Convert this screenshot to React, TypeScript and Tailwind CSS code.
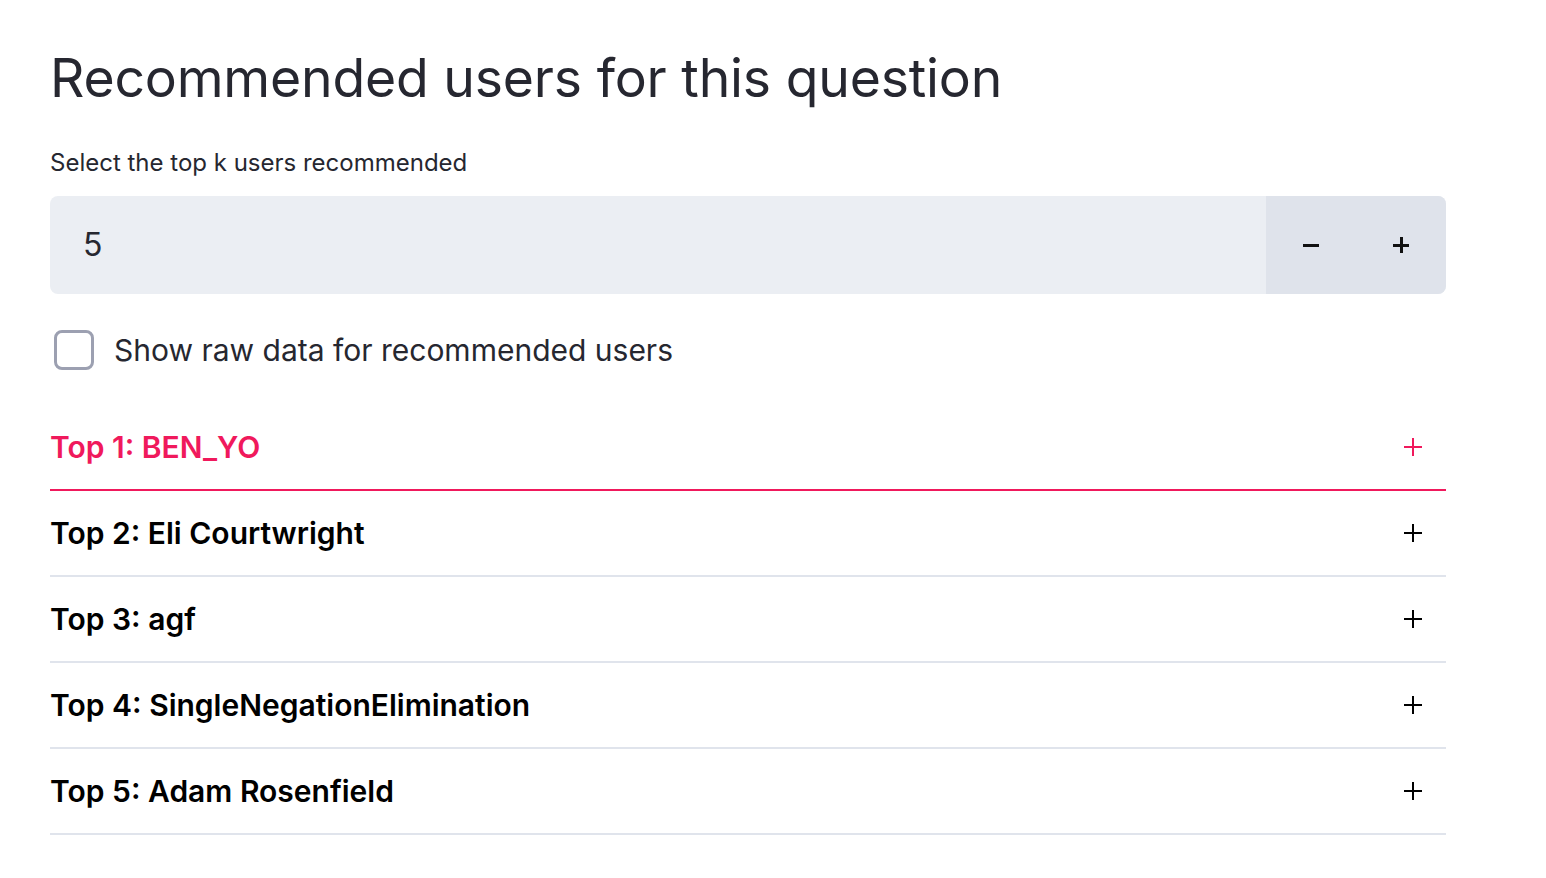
import { useState } from "react";

const users = ["BEN_YO", "Eli Courtwright", "agf", "SingleNegationElimination", "Adam Rosenfield"];

function PlusIcon({ className }: { className?: string }) {
    return (
        <svg width="20" height="20" viewBox="0 0 20 20" className={className}>
            <path d="M10 1v18M1 10h18" stroke="currentColor" strokeWidth="2" strokeLinecap="butt" />
        </svg>
    );
}

export default function App() {
    const [k, setK] = useState(5);
    const [raw, setRaw] = useState(false);

    return (
        <div className="min-h-screen bg-white px-[50px] text-[#262730] [font-family:Inter,'Noto_Sans',sans-serif]">
            <div className="w-[1396px]">
                <h1 className="pt-[44px] text-[53.5px] leading-[68px] font-normal tracking-[-0.2px]">
                    Recommended users for this question
                </h1>

                <div className="mt-[36px] text-[24px] leading-[30px]">Select the top k users recommended</div>

                <div className="mt-[18px] flex h-[98px] overflow-hidden rounded-[8px] bg-[#ebeef3]">
                    <div className="flex flex-1 items-center pl-[33px] text-[32px]">{k}</div>
                    <div className="flex w-[180px] bg-[#dfe3eb]">
                        <button
                            className="flex w-[90px] items-center justify-center"
                            onClick={() => setK(Math.max(1, k - 1))}
                        >
                            <span className="block h-[3px] w-[16px] bg-[#111]" />
                        </button>
                        <button
                            className="relative flex w-[90px] items-center justify-center"
                            onClick={() => setK(k + 1)}
                        >
                            <span className="block h-[3px] w-[16px] bg-[#111]" />
                            <span className="absolute h-[16px] w-[3px] bg-[#111]" />
                        </button>
                    </div>
                </div>

                <label className="mt-[36px] flex cursor-pointer items-center gap-[20px] pl-[4px]">
                    <span
                        onClick={() => setRaw(!raw)}
                        className="block h-[40px] w-[40px] rounded-[8px] border-[3px] border-[#9ca0b1] bg-white"
                    />
                    <span className="text-[30px] leading-[40px]">Show raw data for recommended users</span>
                </label>

                <div className="mt-[35px]">
                    {users.map((u, i) => {
                        const first = i === 0;
                        return (
                            <div
                                key={u}
                                className={
                                    first
                                        ? "flex h-[86px] items-center justify-between border-b-2 border-[#f0195c] text-[#f0195c]"
                                        : "flex h-[86px] items-center justify-between border-b-2 border-[#e0e4ec] text-black"
                                }
                            >
                                <span className="text-[30px] leading-[40px] font-semibold">
                                    Top {i + 1}: {u}
                                </span>
                                <PlusIcon className="mr-[23px]" />
                            </div>
                        );
                    })}
                </div>
            </div>
        </div>
    );
}
